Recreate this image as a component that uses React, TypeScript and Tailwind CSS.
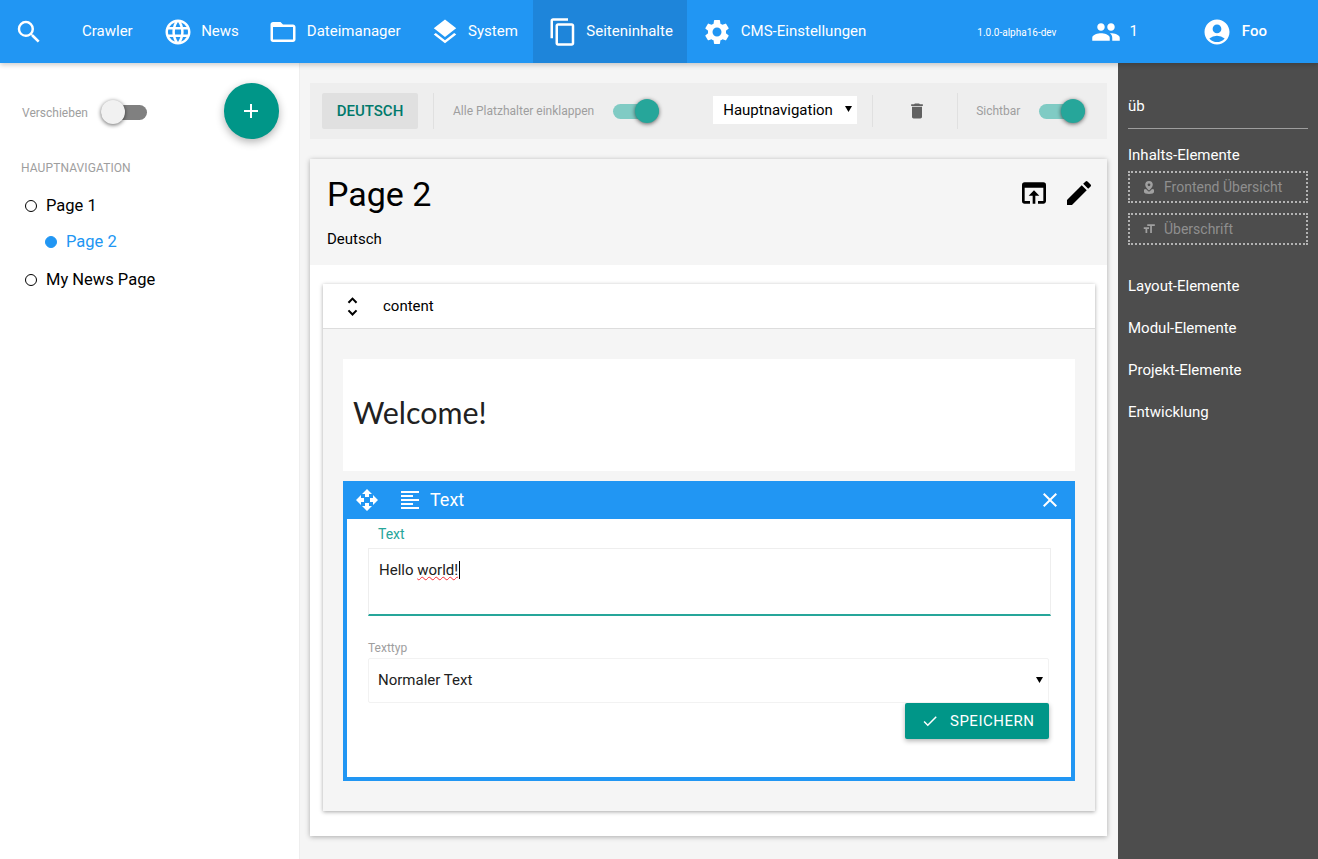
import type { ReactNode } from 'react';
import {
  MdAccountCircle,
  MdAdd,
  MdCheck,
  MdClose,
  MdContentCopy,
  MdDelete,
  MdEdit,
  MdFolderOpen,
  MdFormatAlignLeft,
  MdFormatSize,
  MdLanguage,
  MdLayers,
  MdOpenInBrowser,
  MdOpenWith,
  MdPeople,
  MdSearch,
  MdSettings,
  MdUnfoldMore,
} from 'react-icons/md';
import type { IconType } from 'react-icons';

interface NavItem {
  icon?: IconType;
  label: string;
  className: string;
  active?: boolean;
}

const navItems: NavItem[] = [
  { label: 'Crawler', className: 'ml-[38px]' },
  { icon: MdLanguage, label: 'News', className: 'ml-[30px]' },
  { icon: MdFolderOpen, label: 'Dateimanager', className: 'ml-[29.5px]' },
  { icon: MdLayers, label: 'System', className: 'ml-[29px]' },
  { icon: MdContentCopy, label: 'Seiteninhalte', className: 'ml-[15.5px] px-[14.5px]', active: true },
  { icon: MdSettings, label: 'CMS-Einstellungen', className: 'ml-[15px]' },
];

// Material style slide toggle
function Toggle({ on }: { on: boolean }) {
  return (
    <div className={`relative h-[15px] w-[46px] rounded-full ${on ? 'bg-[#80cbc4]' : 'bg-[#808080]'}`}>
      <div
        className={`absolute top-[-5px] h-[24px] w-[24px] rounded-full shadow-[0_1px_4px_rgba(0,0,0,0.6)] ${
          on ? 'right-0 bg-[#26a69a]' : 'left-0 bg-[#f1f1f1]'
        }`}
      />
    </div>
  );
}

// Native-looking small arrow of the select boxes
function SelectArrow({ className }: { className: string }) {
  return (
    <svg width="7" height="6" viewBox="0 0 7 6" className={`pointer-events-none absolute ${className}`}>
      <path d="M0 0h7L3.5 6z" fill="#000" />
    </svg>
  );
}

function PinIcon() {
  return (
    <svg width="10" height="13" viewBox="0 0 10 13" fill="currentColor">
      <path
        fillRule="evenodd"
        d="M5 0a3.8 3.8 0 0 1 3.8 3.8C8.8 6 6.3 8.4 5 9.5 3.7 8.4 1.2 6 1.2 3.8A3.8 3.8 0 0 1 5 0zm0 2.4a1.4 1.4 0 1 0 0 2.8 1.4 1.4 0 0 0 0-2.8z"
      />
      <path d="M0 8.5 2 8c.8 1 2 2 3 2.7C6 10 7.2 9 8 8l2 .5V11c0 1-2 2-5 2s-5-1-5-2z" />
    </svg>
  );
}

function TreeItem({ label, active, indent }: { label: string; active?: boolean; indent?: boolean }) {
  return (
    <div className={`flex items-center gap-[9px] ${indent ? 'pl-[45px]' : 'pl-[25px]'}`}>
      <span
        className={`h-[12px] w-[12px] rounded-full border-[1.5px] ${
          active ? 'border-[#2196f3] bg-[#2196f3]' : 'border-black'
        }`}
      />
      <span className={`text-[16.5px] ${active ? 'text-[#2196f3]' : 'text-black'}`}>{label}</span>
    </div>
  );
}

function DraggableElement({ icon, label }: { icon: ReactNode; label: string }) {
  return (
    <div className="flex h-[32px] items-center gap-[7px] border-2 border-dotted border-[#b3b3b3] pl-[11px] text-[14px] text-[#8f8f8f]">
      <span className="flex w-[16px] justify-center text-[#a0a0a0]">{icon}</span>
      <span>{label}</span>
    </div>
  );
}

export default function App() {
  return (
    <div className="flex h-[859px] flex-col overflow-hidden bg-white font-['Roboto',sans-serif]">
      {/* Top bar */}
      <header className="relative z-10 flex h-[63px] shrink-0 items-stretch bg-[#2196f3] text-[15px] text-white shadow-[0_2px_5px_rgba(0,0,0,0.2)]">
        <div className="flex items-center pl-[14px]">
          <MdSearch size={30} />
        </div>
        {navItems.map(({ icon: Icon, label, className, active }) => (
          <div
            key={label}
            className={`flex items-center gap-[8.5px] ${className} ${active ? 'bg-[#1e85da]' : ''}`}
          >
            {Icon && <Icon size={30} />}
            <span>{label}</span>
          </div>
        ))}
        <div className="ml-[111px] flex items-center pt-[2px] text-[10px]">1.0.0-alpha16-dev</div>
        <div className="ml-[35px] flex items-center gap-[8px]">
          <MdPeople size={30} />
          <span>1</span>
        </div>
        <div className="ml-[64px] flex items-center gap-[10px]">
          <MdAccountCircle size={30} />
          <span className="font-medium">Foo</span>
        </div>
      </header>

      <div className="flex min-h-0 flex-1">
        {/* Page tree */}
        <aside className="w-[300px] shrink-0 border-r border-[#eeeeee] bg-white">
          <div className="flex items-start pl-[22px] pt-[20px]">
            <div className="mt-[20px] flex h-[20px] items-center text-[12px] text-[#9e9e9e]">Verschieben</div>
            <div className="ml-[13px] mt-[22px]">
              <Toggle on={false} />
            </div>
            <div className="ml-[77px] flex h-[56px] w-[55px] items-center justify-center rounded-full bg-[#009688] text-white shadow-[0_3px_8px_rgba(0,0,0,0.3)]">
              <MdAdd size={24} />
            </div>
          </div>
          <div className="mt-[20px] pl-[21px] text-[12px] tracking-[0.1px] text-[#9e9e9e]">HAUPTNAVIGATION</div>
          <div className="mt-[17px] flex flex-col">
            <div className="h-[36px]">
              <TreeItem label="Page 1" />
            </div>
            <div className="h-[38px]">
              <TreeItem label="Page 2" active indent />
            </div>
            <TreeItem label="My News Page" />
          </div>
        </aside>

        {/* Main column */}
        <main className="flex min-w-0 flex-1 flex-col bg-[#f5f5f5] pl-[10px] pr-[11px] pt-[20px]">
          <div className="flex h-[56px] items-center bg-[#eeeeee] pl-[12px]">
            <div className="flex h-[36px] w-[96px] items-center justify-center rounded-[2px] bg-[#e0e0e0] text-[15px] font-medium text-[#00796b]">
              DEUTSCH
            </div>
            <div className="ml-[15px] h-[36px] w-px bg-[#e0e0e0]" />
            <span className="ml-[19px] text-[12px] text-[#9e9e9e]">Alle Platzhalter einklappen</span>
            <div className="ml-[19px]">
              <Toggle on />
            </div>
            <div className="relative ml-[54px] mt-[-3px] h-[28px] w-[144px]">
              <select
                defaultValue="Hauptnavigation"
                className="h-full w-full appearance-none border-0 bg-white pl-[10px] pt-[2px] text-[15px] text-black"
              >
                <option>Hauptnavigation</option>
              </select>
              <SelectArrow className="right-[5px] top-[10px]" />
            </div>
            <div className="ml-[15px] h-[32px] w-px bg-[#e0e0e0]" />
            <MdDelete size={20} className="ml-[34px] text-[#616161]" />
            <div className="ml-[30px] h-[36px] w-px bg-[#e0e0e0]" />
            <span className="ml-[18px] text-[12px] text-[#9e9e9e]">Sichtbar</span>
            <div className="ml-[19px]">
              <Toggle on />
            </div>
          </div>

          <section className="mt-[20px] h-[677px] bg-white shadow-[0_1px_5px_rgba(0,0,0,0.3)]">
            <div className="flex h-[106px] justify-between bg-[#f5f5f5] pl-[17px] pr-[12px] pt-[13px]">
              <div>
                <h1 className="text-[34px] leading-[44px] text-black">Page 2</h1>
                <p className="mt-[12px] text-[15px] text-black">Deutsch</p>
              </div>
              <div className="flex gap-[13px] pt-[5px] text-black">
                <MdOpenInBrowser size={32} />
                <MdEdit size={32} />
              </div>
            </div>

            {/* Placeholder */}
            <div className="ml-[13px] mr-[12px] mt-[19px] h-[527px] bg-[#f5f5f5] shadow-[0_1px_4px_rgba(0,0,0,0.35)]">
              <div className="flex h-[45px] items-center border-b border-[#dddddd] bg-white pl-[17px] text-[15px] text-black">
                <MdUnfoldMore size={25} />
                <span className="ml-[18px]">content</span>
              </div>
              <div className="px-[20px] pt-[30px]">
                <div className="flex h-[112px] items-center bg-white pb-[4px] pl-[10px] font-['Lato',sans-serif] text-[30.4px] text-[#212121]">
                  Welcome!
                </div>

                {/* Element being edited */}
                <div className="mt-[10px] h-[300px] border-[4px] border-t-0 border-[#2196f3] bg-white">
                  <div className="-mx-[4px] flex h-[38px] items-center bg-[#2196f3] pl-[12px] pr-[13px] text-[18px] text-white">
                    <MdOpenWith size={24} />
                    <MdFormatAlignLeft size={24} className="ml-[19px]" />
                    <span className="ml-[8px] pb-[2px]">Text</span>
                    <MdClose size={24} className="ml-auto" />
                  </div>
                  <div className="pl-[21px] pr-[20px]">
                    <div className="pl-[10px] pt-[8px] text-[14px] leading-[15px] text-[#26a69a]">Text</div>
                    <div className="mt-[6px] h-[68px] w-[683px] border border-b-2 border-[#eeeeee] border-b-[#26a69a] px-[10px] pt-[11px] text-[15px] leading-[20px] text-[#212121]">
                      Hello{' '}
                      <span className="border-r border-black pr-px">
                        <span className="underline decoration-red-500 decoration-wavy decoration-1">world!</span>
                      </span>
                    </div>
                    <div className="mt-[25px] text-[12px] leading-[14px] text-[#9e9e9e]">Texttyp</div>
                    <div className="relative mt-[3px] h-[45px] w-[681px]">
                      <select
                        defaultValue="Normaler Text"
                        className="block h-full w-full appearance-none rounded-[2px] border border-[#f2f2f2] bg-white pl-[9px] text-[15px] text-[#212121]"
                      >
                        <option>Normaler Text</option>
                      </select>
                      <SelectArrow className="right-[6px] top-[19px]" />
                    </div>
                    <div className="flex w-[681px] justify-end">
                      <div className="flex h-[36px] w-[144px] items-center rounded-[2px] bg-[#009688] pl-[16px] text-[15px] tracking-[0.5px] text-white shadow-[0_2px_5px_rgba(0,0,0,0.3)]">
                        <MdCheck size={18} />
                        <span className="ml-[11px]">SPEICHERN</span>
                      </div>
                    </div>
                  </div>
                </div>
              </div>
            </div>
          </section>
        </main>

        {/* Element palette */}
        <aside className="w-[200px] shrink-0 bg-[#4d4d4d] px-[10px] text-[15px] text-white">
          <div className="flex h-[66px] items-center border-b border-[#9e9e9e] pt-[21px]">üb</div>
          <div className="mt-[17px] leading-[18px]">Inhalts-Elemente</div>
          <div className="mt-[7px] flex flex-col gap-[10px]">
            <DraggableElement icon={<PinIcon />} label="Frontend Übersicht" />
            <DraggableElement icon={<MdFormatSize size={14} />} label="Überschrift" />
          </div>
          <div className="mt-[32px] flex flex-col gap-[24px] leading-[18px]">
            <div>Layout-Elemente</div>
            <div>Modul-Elemente</div>
            <div>Projekt-Elemente</div>
            <div>Entwicklung</div>
          </div>
        </aside>
      </div>
    </div>
  );
}
